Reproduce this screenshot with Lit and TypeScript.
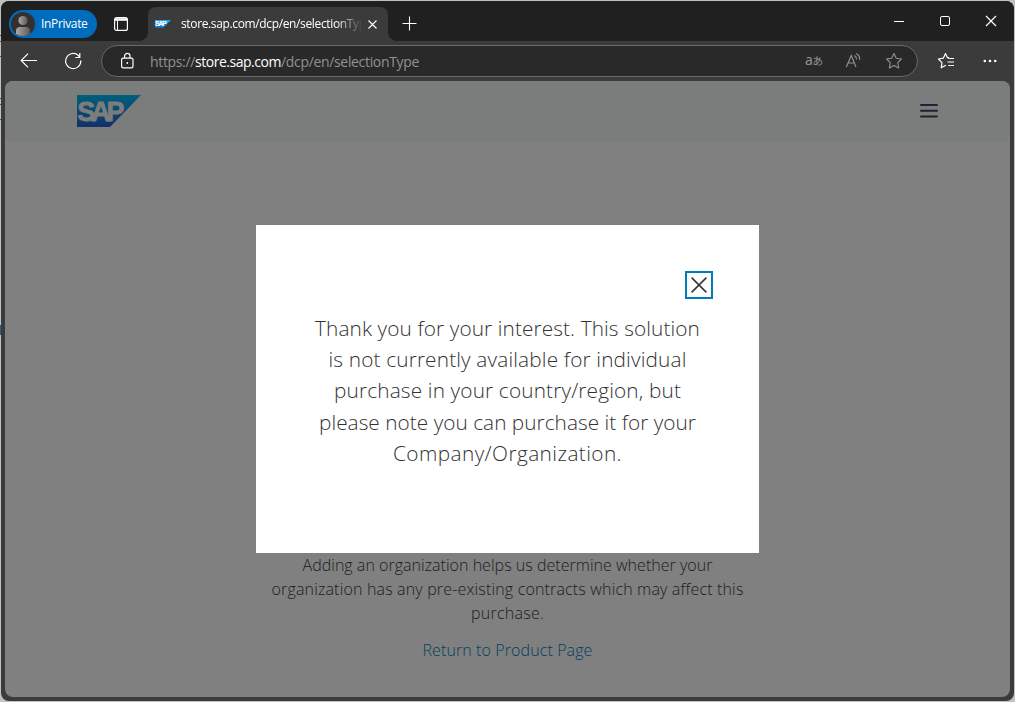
import { LitElement, html, css, svg } from "lit";
import { customElement, property } from "lit/decorators.js";

/** One line of text whose tracking is adjusted so that it spans a given measure. */
@customElement("fit-line")
class FitLine extends LitElement {
  static styles = css`
    :host { display: block; white-space: pre; flex: none; }
    span { display: inline-block; }
  `;
  @property() text = "";
  @property({ type: Number }) measure = 0;
  render() {
    return html`<span>${this.text}</span>`;
  }
  updated() {
    const el = this.renderRoot.querySelector("span") as HTMLElement;
    el.style.letterSpacing = "0px";
    const natural = el.getBoundingClientRect().width;
    const step = (this.measure - natural) / (this.text.length || 1);
    el.style.letterSpacing = `${step}px`;
  }
}

const line = (text: string, measure: number) =>
  html`<fit-line .text=${text} .measure=${measure}></fit-line>`;

const sapLogo = (id: string) => svg`
  <defs><linearGradient id=${id} x1="0" y1="0" x2="0" y2="1">
    <stop offset="0" stop-color="var(--logo-top)" /><stop offset="1" stop-color="var(--logo-bottom)" />
  </linearGradient></defs>
  <path d="M0 0H64L33 32H0Z" fill="url(#${id})" />
  <text class="logo-text" x="0.3" y="25.500">SAP</text>`;

@customElement("app-root")
class AppRoot extends LitElement {
  static styles = css`
    :host {
      display: block; box-sizing: border-box; width: 1015px; height: 702px; padding: 1px;
      overflow: hidden; font-family: "Open Sans", "Noto Sans", sans-serif;
      background:
        linear-gradient(#555, #555) 0 35px / 1px 1px no-repeat,
        linear-gradient(#555, #555) 0 41px / 1px 1px no-repeat,
        linear-gradient(#555, #555) 0 56px / 1px 1px no-repeat,
        linear-gradient(#555, #555) 0 98px / 1px 1px no-repeat,
        linear-gradient(#555, #555) 0 104px / 1px 1px no-repeat,
        linear-gradient(#555, #555) 0 119px / 1px 1px no-repeat,
        linear-gradient(#345a8a, #345a8a) 0 325px / 1px 10px no-repeat,
        #bfc2c1;
    }
    * { box-sizing: border-box; }
    svg { display: block; flex: none; fill: none; overflow: visible; }
    .window {
      width: 1013px; height: 700px; border-radius: 8px; background: #3b3b3b; overflow: hidden;
      display: flex; flex-direction: column; padding: 0 4px 4px;
    }
    .tabs { height: 40px; margin: 0 -4px; background: #202020; display: flex; flex: none; align-items: flex-start; }
    .private {
      margin: 9px 0 0 8px; width: 88px; height: 28px; border-radius: 14px; background: #006cbe; color: #fff;
      display: flex; align-items: center; padding-left: 2px; gap: 6px; font-size: 12px; line-height: 28px;
    }
    .tab-actions { margin: 16px 0 0 17px; }
    .tab {
      position: relative; margin: 6px 0 0 20px; width: 240px; height: 34px; border-radius: 8px 8px 0 0;
      background: #3b3b3b; display: flex; align-items: center; padding-left: 7px; color: #fff; font-size: 12px;
    }
    .tab::before, .tab::after {
      content: ""; position: absolute; bottom: 0; width: 8px; height: 8px;
    }
    .tab::before { left: -8px; background: radial-gradient(circle at 0 0, #202020 7.5px, #3b3b3b 8px); }
    .tab::after { right: -8px; background: radial-gradient(circle at 100% 0, #202020 7.5px, #3b3b3b 8px); }
    .title {
      width: 180px; margin-left: 10px; line-height: 20px; overflow: hidden;
      -webkit-mask-image: linear-gradient(90deg, #000 154px, transparent 182px);
    }
    .tab-close { margin-left: 7px; }
    .new-tab { margin: 15px 0 0 14px; }
    .win-actions { margin: 14px 16px 0 auto; display: flex; gap: 32px; }
    .toolbar { height: 40px; flex: none; display: flex; align-items: center; }
    .back { margin-left: 15px; }
    .reload { margin-left: 26px; }
    .address {
      margin-left: 19px; width: 817px; height: 32px; border: 1px solid #696969; border-radius: 16px;
      background: #292929; display: flex; align-items: center; padding: 0 14px 0 19px;
      color: #929292; font-size: 14px; line-height: 20px;
    }
    .url { margin-left: 16px; padding-top: 1px; display: flex; }
    .host { color: #fff; }
    .addr-icons { margin-left: auto; display: flex; align-items: center; gap: 22px; }
    .cjk { font-family: "Noto Sans", "Noto Sans CJK JP", sans-serif; font-size: 14px; fill: #929292; }
    .kana { font-family: "Noto Sans CJK JP", sans-serif; font-size: 10.5px; fill: #929292; }
    .fav { margin-left: 19px; }
    .more { margin-left: 28px; }
    .page {
      --logo-top: #005f7d; --logo-bottom: #123168; --logo-ink: #7b7d7d;
      position: relative; flex: 1; border-radius: 8px; background: #808080; overflow: hidden;
      display: flex; flex-direction: column; align-items: center;
    }
    .header {
      width: 100%; height: 60px; background: #7a7d7c; display: flex; flex: none; justify-content: space-between;
      align-items: center; padding: 0 72px;
    }
    .logo-text {
      font-family: "Liberation Sans", sans-serif; font-weight: 700; font-size: 27px; letter-spacing: -4.2px;
      fill: var(--logo-ink); stroke: var(--logo-ink); stroke-width: 0.8;
    }
    .favicon { --logo-top: #12b0ee; --logo-bottom: #1a65c0; --logo-ink: #fff; }
    .dialog {
      width: 503px; height: 328px; margin-top: 84px; flex: none; background: #fff; color: #333; display: flex;
      flex-direction: column; align-items: center; font-weight: 300;
    }
    .close {
      align-self: flex-end; margin: 46px 46px 0 0; width: 28px; height: 28px; border: 2px solid #007db8;
      padding: 4px; background: none;
    }
    .message {
      margin-top: 14px; font-size: 20.8px; line-height: 31.2px; display: flex; flex-direction: column;
      align-items: center; font-weight: 330;
    }
    .note {
      font-size: 16px; line-height: 24px; font-weight: 330; color: #1c1c1c; display: flex;
      flex-direction: column; align-items: center;
    }
    .link { margin-top: 13px; font-size: 16px; line-height: 24px; font-weight: 330; color: #00405e; }
  `;

  render() {
    return html`
      <div class="window">
        <div class="tabs">
          <div class="private">
            <svg width="24" height="24" viewBox="0 0 24 24">
              <defs>
                <clipPath id="round"><circle cx="12" cy="12" r="12" /></clipPath>
                <linearGradient id="person"><stop stop-color="#aaa" /><stop offset="1" stop-color="#5c5855" /></linearGradient>
              </defs>
              <g clip-path="url(#round)">
                <path fill="#33302e" d="M0 0h24v24H0z" />
                <circle cx="12" cy="8.5" r="4.6" fill="url(#person)" />
                <path d="M5 24v-5q0-4 4-4h6q4 0 4 4v5z" fill="url(#person)" />
              </g>
            </svg>
            ${line("InPrivate", 46.5)}
          </div>
          <svg class="tab-actions" width="14" height="14" viewBox="0 0 14 14">
            <rect x=".6" y=".6" width="12.8" height="12.8" rx="2" stroke="#fff" stroke-width="1.2" />
            <path d="M1 2.500H13" stroke="#fff" stroke-width="2.400" /><path d="M3.500 3V13" stroke="#fff" />
          </svg>
          <div class="tab">
            <svg class="favicon" width="16" height="8" viewBox="0 0 64 32">${sapLogo("fav")}</svg>
            <div class="title">${line("store.sap.com/dcp/en/selectionType", 191)}</div>
            <svg class="tab-close" width="9" height="9" viewBox="0 0 9 9"><path d="M.5 .5l8 8M8.500 .5l-8 8" stroke="#fff" stroke-width="1.1" /></svg>
          </div>
          <svg class="new-tab" width="15" height="15" viewBox="0 0 15 15"><path d="M7.500 .5v14M.5 7.500h14" stroke="#fff" stroke-width="1.1" /></svg>
          <div class="win-actions">
            <svg width="14" height="14" viewBox="0 0 14 14"><path d="M2 6.500h10" stroke="#fff" /></svg>
            <svg width="14" height="14" viewBox="0 0 14 14"><rect x="2.500" y="1.500" width="9" height="9" rx="1.500" stroke="#fff" /></svg>
            <svg width="14" height="14" viewBox="0 0 14 14"><path d="M2 1l10 10M12 1L2 11" stroke="#fff" stroke-width="1.200" /></svg>
          </div>
        </div>
        <div class="toolbar">
          <svg class="back" width="18" height="16" viewBox="0 0 18 16"><path d="M17 7.500H1.500M8 .7L1.200 7.500L8 14.300" stroke="#fff" stroke-width="1.200" /></svg>
          <svg class="reload" width="18" height="18" viewBox="0 0 18 18">
            <path d="M16.800 8.500A7.600 7.600 0 1 1 13.500 2.700L15.500 5M15.800 1v4.500h-4.500" stroke="#fff" stroke-width="1.200" />
          </svg>
          <div class="address">
            <svg width="13" height="16" viewBox="0 0 13 16">
              <rect x=".6" y="5.100" width="11.400" height="9.800" rx="1.600" stroke="#fff" stroke-width="1.200" />
              <path d="M3.600 5V3a2.700 2.700 0 0 1 5.400 0v2" stroke="#fff" stroke-width="1.200" />
              <circle cx="6.300" cy="10" r=".9" fill="#fff" />
            </svg>
            <div class="url">
              ${line("https://", 45)}<span class="host">${line("store.sap.com", 86)}</span>${line("/dcp/en/selectionType", 138)}
            </div>
            <div class="addr-icons">
              <svg width="18" height="18" viewBox="0 0 18 18">
                <text class="cjk" x="0" y="13">a</text>
                <text class="kana" x="7.500" y="13">あ</text>
              </svg>
              <svg width="18" height="18" viewBox="0 0 18 18" stroke="#929292" stroke-width="1.100">
                <path d="M1.300 15L6.300 3.500L11 15M3 11h6.500M9.500 3.500q2.200 1.500 2 4M11.300 1.500q4 2.500 3.300 6.500" />
              </svg>
              <svg width="18" height="18" viewBox="0 0 18 18">
                <path d="M9 1.600L11.300 6.300L16.500 7L12.700 10.700L13.700 16L9 13.400L4.300 16L5.300 10.700L1.500 7L6.700 6.300Z" stroke="#929292" stroke-width="1.100" stroke-linejoin="round" />
              </svg>
            </div>
          </div>
          <svg class="fav" width="18" height="18" viewBox="0 0 18 18" stroke="#fff" stroke-width="1.200">
            <path d="M12 5.700H10.500L8.500 1.600L6.300 6.200L1.400 7L5 10.600L4.200 15.800L8.800 13.300M8.500 1.600L10.500 5.700" stroke-linejoin="round" />
            <path d="M11.300 6.500H17M10.500 10H17M11.300 13.500H17" />
          </svg>
          <svg class="more" width="14" height="4" viewBox="0 0 14 4"><g fill="#fff"><circle cx="1.800" cy="2" r="1.300" /><circle cx="7" cy="2" r="1.300" /><circle cx="12.200" cy="2" r="1.300" /></g></svg>
        </div>
        <div class="page">
          <div class="header">
            <svg width="64" height="32" viewBox="0 0 64 32">${sapLogo("brand")}</svg>
            <svg width="18" height="14" viewBox="0 0 18 14"><path d="M1 1h16M1 6.700h16M1 12.500h16" stroke="#1a2531" stroke-width="2" stroke-linecap="round" /></svg>
          </div>
          <div class="dialog" role="dialog">
            <button class="close" aria-label="Close">
              <svg width="16" height="16" viewBox="0 0 16 16"><path d="M.6 .6l14.800 14.800M15.400 .6L.6 15.400" stroke="#333" stroke-width="1.500" /></svg>
            </button>
            <div class="message">
              ${line("Thank you for your interest. This solution", 385)}
              ${line("is not currently available for individual", 358)}
              ${line("purchase in your country/region, but", 347)}
              ${line("please note you can purchase it for your", 377)}
              ${line("Company/Organization.", 229)}
            </div>
          </div>
          <div class="note">
            ${line("Adding an organization helps us determine whether your", 410)}
            ${line("organization has any pre-existing contracts which may affect this", 472)}
            ${line("purchase.", 73)}
          </div>
          <div class="link">${line("Return to Product Page", 170)}</div>
        </div>
      </div>
    `;
  }
}
